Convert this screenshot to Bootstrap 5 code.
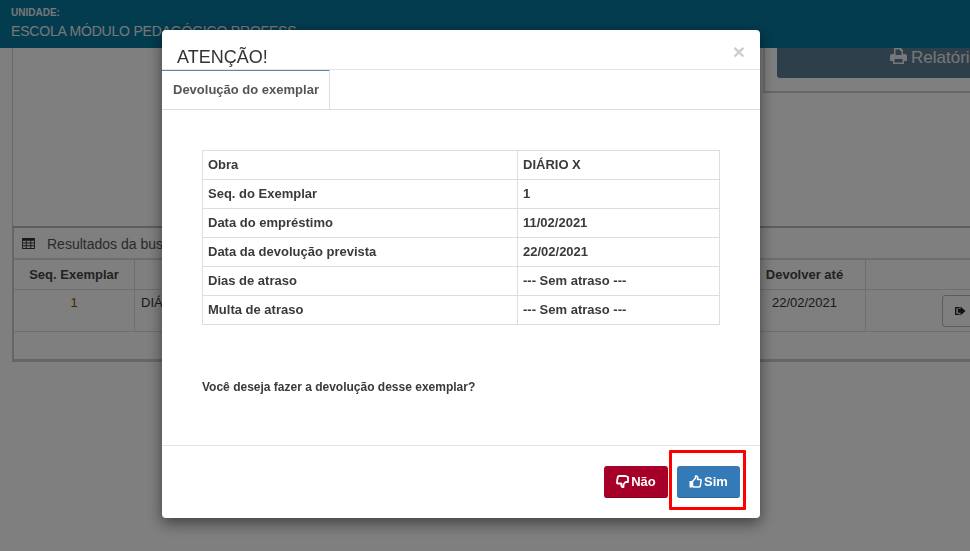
<!DOCTYPE html>
<html lang="pt">
<head>
<meta charset="utf-8">
<title>Devolução</title>
<link href="https://cdn.jsdelivr.net/npm/bootstrap@5.3.0/dist/css/bootstrap.min.css" rel="stylesheet">
<style>
html,body{height:100%;overflow:hidden}
body{font-family:"Liberation Sans",Arial,sans-serif;font-size:13px;color:#333;background:#fff;width:970px;height:551px}
.topbar{height:48px;background:#07779e;color:#fff;padding:7px 11px 0}
.topbar .lbl{font-size:10px;font-weight:700;line-height:11px;color:#eee}
.topbar .uni{font-size:14px;line-height:20px;margin-top:3px;white-space:nowrap;color:#eee;letter-spacing:-.2px}
.upper{height:178px;margin:0 0 0 12px;border-left:1px solid #ccc}
.reportbox{width:207px;height:45px;border-left:2px solid #ddd;border-bottom:2px solid #ccc;padding-left:12px;overflow:hidden}
.reportbtn{width:220px;height:30px;background:#5b7f94;color:#eee;border-radius:0 0 3px 3px;font-size:17px;line-height:18px;padding:0 0 0 113px;white-space:nowrap;display:flex;gap:4px;align-items:flex-start}
.reportbtn span{padding-top:1px}
.results{margin:0 0 0 12px;border-top:2px solid #bbb;border-left:2px solid #ccc;border-bottom:3px solid #ccc;height:136px;font-size:14px}
.results-head{height:32px;padding:6px 0 0 8px;display:flex;gap:12px;color:#555;border-bottom:2px solid #ddd}
.gridrow{display:flex;border-bottom:1px solid #ddd}
.gridhead{height:30px;line-height:29px;font-weight:700;font-size:13px;color:#444}
.gridbody{height:42px;font-size:13px;line-height:26px}
.c1{flex:none;width:121px;text-align:center;border-right:1px solid #ddd}
.seqnum{color:#8a4a08}
.c2{flex:none;width:609px;border-right:1px solid #ddd;padding-left:6px}
.c3{flex:none;width:122px;text-align:center;border-right:1px solid #ddd}
.c4{flex:1 1 0;min-width:0;position:relative}
.goBtn{width:40px;height:32px;border:1px solid #bbb;border-radius:3px;margin:5px 0 0 76px;background:#fff;display:flex;align-items:center;padding-left:12px}
.scrim{position:fixed;inset:0;background:#000;opacity:.5}
.dlg{position:fixed;left:162px;top:30px;width:598px;height:488px;background:#fff;border-radius:4px;box-shadow:0 5px 15px rgba(0,0,0,.5);display:flex;flex-direction:column}
.dlg-head{height:40px;padding:17px 0 0 15px;font-size:18px;line-height:21px;color:#333;position:relative;border-bottom:1px solid #e5e5e5}
.dlg-x{position:absolute;right:15px;top:11px;font-size:21px;font-weight:700;line-height:21px;color:#000;opacity:.2}
.tabline{height:40px;border-bottom:1px solid #ddd;flex:none}
.tabitem{width:168px;height:40px;margin-top:-1px;border-top:2px solid #5a8a9f;border-right:1px solid #ddd;background:#fff;font-weight:700;font-size:13px;color:#555;padding:10px 0 0 11px;line-height:18px}
.dlg-body{flex:1;padding:40px 40px 0}
.info{width:518px;border-collapse:collapse;font-size:13px;color:#3a3a3a;font-weight:700}
.info td{border:1px solid #ddd;height:29px;padding:0 5px;line-height:18px}
.info td:first-child{width:315px}
.ask{margin:53px 0 0;font-size:12px;font-weight:700;line-height:18px;color:#3a3a3a}
.dlg-foot{height:73px;border-top:1px solid #e5e5e5;display:flex;justify-content:flex-end;gap:9px;padding:20px 20px 0 0;position:relative;flex:none}
.actbtn{height:32px;border-radius:3px;color:#fff;font-size:13px;font-weight:700;display:flex;align-items:center;justify-content:center;gap:2px;border:0;padding:0}
.btn-nao{width:64px;background:#a60029;border-bottom:1px solid #8a0022}
.btn-sim{width:63px;background:#337ab7;border-bottom:1px solid #2a6496}
.mark-red{position:absolute;left:507px;top:4px;width:77px;height:60px;border:3px solid #f00;border-radius:1px;pointer-events:none}
</style>
</head>
<body>
<div class="topbar">
  <div class="lbl">UNIDADE:</div>
  <div class="uni">ESCOLA MÓDULO PEDAGÓGICO PROFESS</div>
</div>
<div class="upper d-flex justify-content-end">
  <div class="reportbox">
    <div class="reportbtn">
      <svg width="17" height="16" viewBox="0 0 17 16"><path fill="#eee" fill-rule="evenodd" d="M4 0h7l2 2v4h2a2 2 0 0 1 2 2v5h-3v3H3v-3H0V8a2 2 0 0 1 2-2h2zm1.500 1.500V7h6V3H10V1.500zM4.500 11v3.500h8V11z"/></svg>
      <span>Relatório</span>
    </div>
  </div>
</div>
<div class="results">
  <div class="results-head">
    <svg width="13" height="11" viewBox="0 0 14 12" class="mt-1"><path fill="#333" fill-rule="evenodd" d="M0 0h14v12H0zm1 3v2h3V3zm4 0v2h4V3zm5 0v2h3V3zM1 6v2h3V6zm4 0v2h4V6zm5 0v2h3V6zM1 9v2h3V9zm4 0v2h4V9zm5 0v2h3V9z"/></svg>
    <span>Resultados da busca</span>
  </div>
  <div class="gridrow gridhead"><div class="c1">Seq. Exemplar</div><div class="c2"></div><div class="c3">Devolver até</div><div class="c4"></div></div>
  <div class="gridrow gridbody"><div class="c1 seqnum">1</div><div class="c2">DIÁRIO X</div><div class="c3">22/02/2021</div><div class="c4"><div class="goBtn"><svg width="11" height="10" viewBox="0 0 12 11"><path fill="#222" d="M0 1h5v1.500H1.500v6H5V10H0zM6 3V0.500L11.500 5.500 6 10.500V7.500H3V3z"/></svg></div></div></div>
</div>
<div class="scrim"></div>
<div class="dlg">
  <div class="dlg-head">ATENÇÃO!<span class="dlg-x">×</span></div>
  <div class="tabline"><div class="tabitem">Devolução do exemplar</div></div>
  <div class="dlg-body">
    <table class="info">
      <tr><td>Obra</td><td>DIÁRIO X</td></tr>
      <tr><td>Seq. do Exemplar</td><td>1</td></tr>
      <tr><td>Data do empréstimo</td><td>11/02/2021</td></tr>
      <tr><td>Data da devolução prevista</td><td>22/02/2021</td></tr>
      <tr><td>Dias de atraso</td><td>--- Sem atraso ---</td></tr>
      <tr><td>Multa de atraso</td><td>--- Sem atraso ---</td></tr>
    </table>
    <p class="ask">Você deseja fazer a devolução desse exemplar?</p>
  </div>
  <div class="dlg-foot">
    <button type="button" class="actbtn btn-nao"><svg width="13" height="13" viewBox="0 0 13 13"><path fill="none" stroke="#fff" stroke-width="1.800" stroke-linejoin="round" d="M3 1h6.500l2.500 1v5H9.500L7.500 9.500V12H6.500C5.500 12 5 10.500 5.500 8.500H2C1 8.500 .7 7.500 1 6.500L1.800 2C2 1.300 2.500 1 3 1z"/></svg>Não</button>
    <button type="button" class="actbtn btn-sim"><svg width="13" height="13" viewBox="0 0 13 13"><path fill="#fff" d="M.5 6h3v6.500h-3z"/><path fill="none" stroke="#fff" stroke-width="1.500" stroke-linejoin="round" d="M3.500 6.500 6.500 3V1h1C8.500 1 9 2.500 8.500 4.500H11.300C12 4.500 12.300 5.300 12 6.500L11.200 11C11 11.700 10.500 12 10 12H5L3.500 11.300z"/></svg>Sim</button>
    <div class="mark-red"></div>
  </div>
</div>
<script src="https://cdn.jsdelivr.net/npm/bootstrap@5.3.0/dist/js/bootstrap.bundle.min.js"></script>
</body>
</html>
